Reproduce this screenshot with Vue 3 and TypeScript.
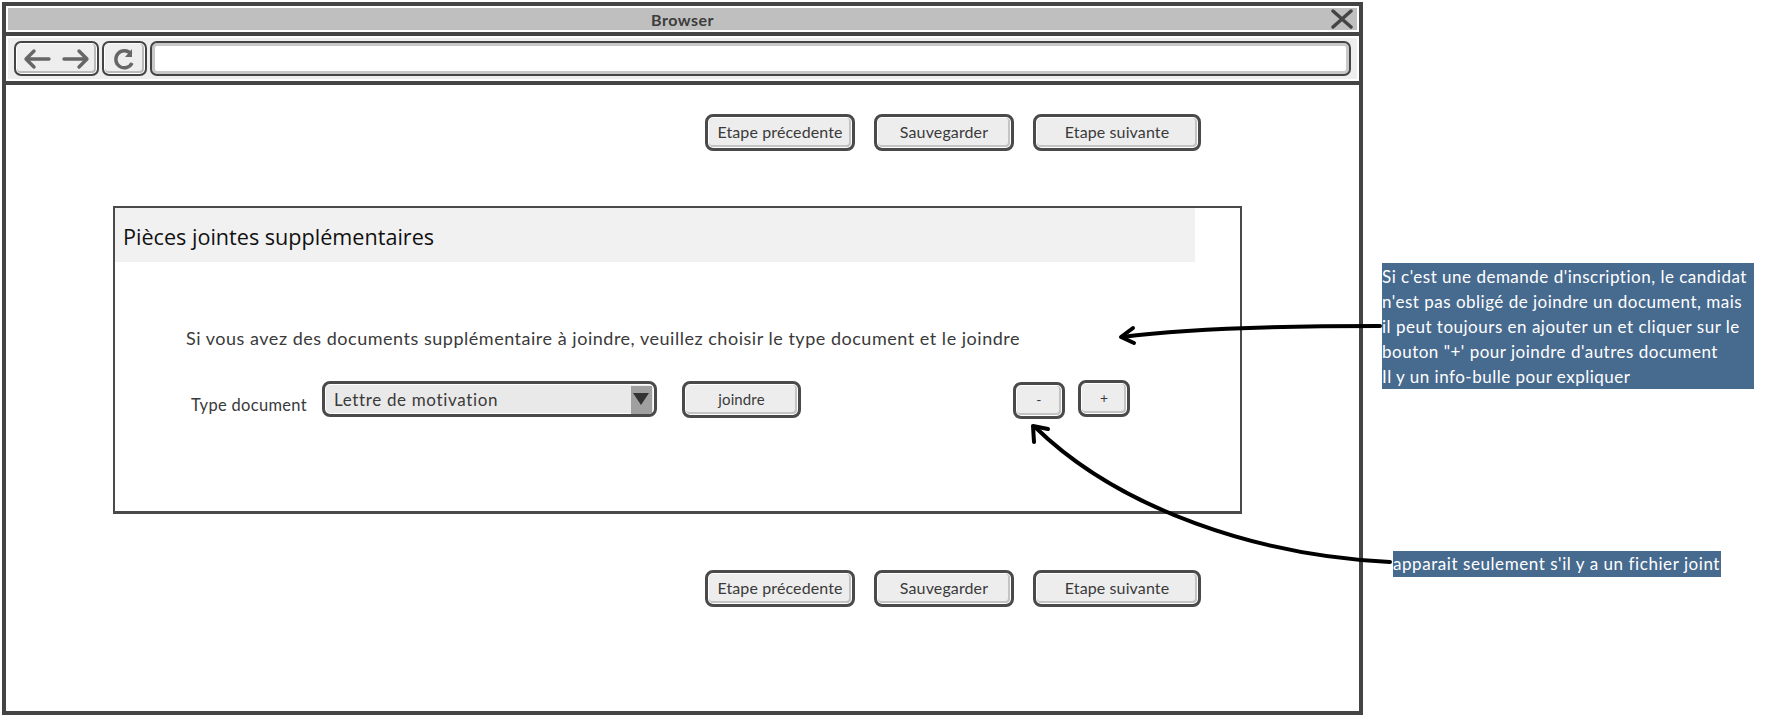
<template>
  <div class="page">
    <div class="browser">
      <div class="title-wrap">
        <div class="title-bar">
          <span>Browser</span>
          <svg class="close" width="22" height="20" viewBox="0 0 22 20">
            <path d="M2 2 L20 18 M20 2 L2 18" stroke="#444" stroke-width="3.4" stroke-linecap="round" fill="none" />
          </svg>
        </div>
      </div>
      <div class="toolbar-wrap">
        <div class="toolbar">
          <div class="tool nav">
            <svg width="86" height="36" viewBox="0 0 86 36">
              <path d="M36 18 H13 M21 10 L13 18 L21 26 M51 18 H74 M66 10 L74 18 L66 26" stroke="#666" stroke-width="3.4" stroke-linecap="round" stroke-linejoin="round" fill="none" />
            </svg>
          </div>
          <div class="tool reload">
            <svg width="45" height="36" viewBox="0 0 45 36">
              <path d="M29 13 A8.5 8.5 0 1 0 30 22" stroke="#666" stroke-width="3.4" fill="none" />
              <path d="M30 8 V16 H23 Z" fill="#666" />
            </svg>
          </div>
          <div class="address"></div>
        </div>
      </div>

      <div class="content">
        <div class="actions">
          <button v-for="step in steps" :key="step.label" class="btn" :class="step.cls">{{ step.label }}</button>
        </div>

        <section class="panel">
          <h2>Pièces jointes supplémentaires</h2>
          <p class="intro">Si vous avez des documents supplémentaire à joindre, veuillez choisir le type document et le joindre</p>
          <div class="fields">
            <label>Type document</label>
            <div class="select">
              <span>Lettre de motivation</span>
              <i class="caret"></i>
            </div>
            <button class="btn join">joindre</button>
            <button class="btn small minus">-</button>
            <button class="btn small plus">+</button>
          </div>
        </section>

        <div class="actions bottom">
          <button v-for="step in steps" :key="step.label" class="btn" :class="step.cls">{{ step.label }}</button>
        </div>
      </div>
    </div>

    <div class="note note-a">
      Si c'est une demande d'inscription, le candidat<br />
      n'est pas obligé de joindre un document, mais<br />
      il peut toujours en ajouter un et cliquer sur le<br />
      bouton "+' pour joindre d'autres document<br />
      Il y un info-bulle pour expliquer
    </div>
    <div class="note note-b">apparait seulement s'il y a un fichier joint</div>

    <svg class="arrows" width="1771" height="720" viewBox="0 0 1771 720">
      <g stroke="#000" stroke-width="4" fill="none" stroke-linecap="round" stroke-linejoin="round">
        <path d="M1380 326 C1290 326 1190 328 1122 337" />
        <path d="M1133 328 L1121 337 L1134 343" />
        <path d="M1390 562 C1260 556 1120 510 1035 427" />
        <path d="M1034 442 L1033 426 L1048 429" />
      </g>
    </svg>
  </div>
</template>

<script setup lang="ts">
const steps = [
  { label: "Etape précedente", cls: "prev" },
  { label: "Sauvegarder", cls: "save" },
  { label: "Etape suivante", cls: "next" },
];
</script>

<style>
html,
body {
  margin: 0;
  background: #fff;
}
</style>

<style scoped>
.page {
  position: relative;
  width: 1771px;
  height: 720px;
  overflow: hidden;
  font-family: "Lato", "Open Sans", sans-serif;
  color: #3a3a3a;
}
.browser {
  box-sizing: border-box;
  width: 1361px;
  height: 713px;
  margin: 2px 0 0 2px;
  border: 4px solid #444;
  display: flex;
  flex-direction: column;
}
.title-wrap {
  padding: 2px;
  border-bottom: 4px solid #444;
}
.title-bar {
  position: relative;
  height: 22px;
  background: #bfbfbf;
  display: flex;
  align-items: center;
  justify-content: center;
  font-size: 16px;
  font-weight: 700;
  letter-spacing: 0.5px;
  color: #3c3c3c;
}
.close {
  position: absolute;
  right: 4px;
  top: 1px;
}
.toolbar-wrap {
  padding: 2px;
  border-bottom: 4px solid #444;
}
.toolbar {
  height: 41px;
  background: #eee;
  display: flex;
  align-items: center;
  gap: 3px;
  padding: 0 6px;
}
.tool {
  box-sizing: border-box;
  height: 35px;
  border: 2px solid #444;
  border-radius: 7px;
  background: #eee;
  box-shadow: inset 0 0 0 1px #fff, inset -1px -1px 0 2px #bbb;
  display: flex;
  align-items: center;
  justify-content: center;
  overflow: hidden;
}
.tool svg {
  flex: none;
}
.nav {
  width: 85px;
}
.reload {
  width: 45px;
}
.address {
  box-sizing: border-box;
  width: 1202px;
  height: 35px;
  border: 2px solid #444;
  border-radius: 7px;
  background: #fff;
  box-shadow: inset 0 0 0 3px #c8c8c8;
}
.content {
  flex: 1;
  display: flex;
  flex-direction: column;
  padding-top: 29px;
}
.actions {
  display: flex;
  gap: 19px;
  margin-left: 699px;
}
.actions.bottom {
  margin-top: 56px;
}
.btn {
  box-sizing: border-box;
  height: 37px;
  padding: 0 0 2px;
  border: 3px solid #4a4a4a;
  border-radius: 8px;
  background: #ededed;
  box-shadow: inset 0 0 0 1px #fff, inset -1px -1px 0 2px #c4c4c4;
  font-family: inherit;
  font-size: 16px;
  letter-spacing: 0.12px;
  color: #3a3a3a;
}
.prev {
  width: 150px;
}
.save {
  width: 140px;
}
.next {
  width: 168px;
}
.panel {
  box-sizing: border-box;
  width: 1129px;
  height: 308px;
  margin: 55px 0 0 107px;
  border: 2px solid #4a4a4a;
  border-bottom-width: 3px;
}
.panel h2 {
  box-sizing: border-box;
  width: 1080px;
  height: 54px;
  margin: 0;
  padding: 2px 0 0 8px;
  background: #f1f1f1;
  display: flex;
  align-items: center;
  font-family: "Open Sans", sans-serif;
  font-size: 21.6px;
  font-weight: 400;
  color: #111;
}
.intro {
  margin: 64px 0 0 71px;
  font-size: 18px;
  line-height: 24px;
  letter-spacing: 0.52px;
  white-space: nowrap;
}
.fields {
  display: flex;
  align-items: flex-start;
  margin: 31px 0 0 76px;
  font-size: 17px;
}
.fields label {
  width: 131px;
  margin-top: 13px;
  font-size: 16.5px;
  letter-spacing: 0.3px;
  line-height: 22px;
}
.select {
  box-sizing: border-box;
  width: 335px;
  height: 36px;
  border: 3px solid #4a4a4a;
  border-radius: 8px;
  background: #e9e9e9;
  box-shadow: inset 0 0 0 1px #fff;
  display: flex;
  align-items: stretch;
  justify-content: space-between;
  padding: 2px 2px 0 9px;
  letter-spacing: 0.65px;
  line-height: 28px;
  overflow: hidden;
}
.caret {
  width: 21px;
  background: #a0a0a0;
  position: relative;
}
.caret::after {
  content: "";
  position: absolute;
  left: 2px;
  top: 7px;
  border-style: solid;
  border-width: 12px 8.5px 0;
  border-color: #333 transparent transparent;
}
.join {
  width: 119px;
  margin-left: 25px;
  font-size: 15px;
}
.small {
  width: 52px;
  font-size: 14px;
}
.minus {
  margin-left: 212px;
  margin-top: 1px;
}
.plus {
  margin-left: 13px;
  margin-top: -1px;
}
.note {
  position: absolute;
  box-sizing: border-box;
  background: #476a8f;
  color: #fff;
  white-space: nowrap;
  letter-spacing: 0.5px;
}
.note-a {
  left: 1382px;
  top: 263px;
  width: 372px;
  height: 126px;
  padding-top: 1px;
  font-size: 17px;
  line-height: 25px;
}
.note-b {
  left: 1393px;
  top: 551px;
  width: 328px;
  height: 26px;
  font-size: 17px;
  line-height: 26px;
  letter-spacing: 0.56px;
}
.arrows {
  position: absolute;
  left: 0;
  top: 0;
  pointer-events: none;
}
</style>
